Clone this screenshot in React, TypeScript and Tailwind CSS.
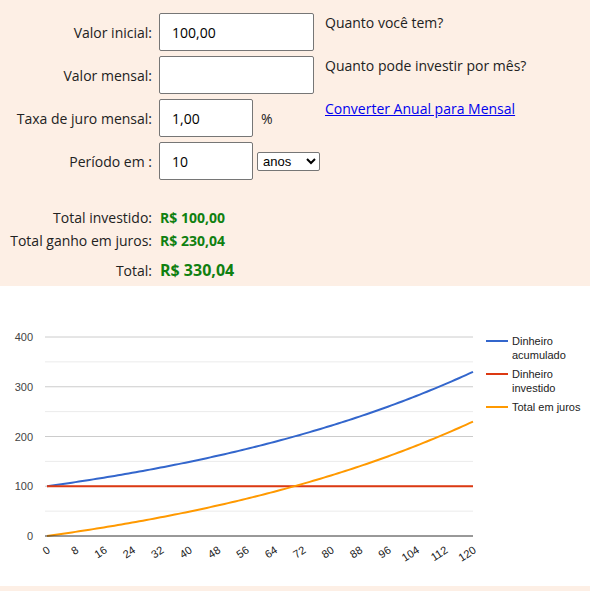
import React from 'react';

const months = Array.from({ length: 121 }, (_, i) => i);
const toX = (m: number) => 47 + m * 3.55;
const toY = (v: number) => 250 - v * 0.4975;

const linePath = (fn: (m: number) => number) =>
    months.map((m, i) => `${i === 0 ? 'M' : 'L'}${toX(m).toFixed(2)},${toY(fn(m)).toFixed(2)}`).join(' ');

const Chart: React.FC = () => {
    const acumulado = linePath(m => 100 * Math.pow(1.01, m));
    const investido = linePath(() => 100);
    const juros = linePath(m => 100 * Math.pow(1.01, m) - 100);
    const ticks = Array.from({ length: 16 }, (_, i) => i * 8);

    return (
        <svg width="590" height="300" className="block" style={{ fontFamily: '"Liberation Sans", Arial, sans-serif' }}>
            {[50, 150, 250, 350].map(v => (
                <line key={v} x1="45" x2="473" y1={toY(v)} y2={toY(v)} stroke="#ebebeb" strokeWidth="1" />
            ))}
            {[100, 200, 300, 400].map(v => (
                <line key={v} x1="45" x2="473" y1={toY(v)} y2={toY(v)} stroke="#cccccc" strokeWidth="1" />
            ))}
            {[0, 100, 200, 300, 400].map(v => (
                <text key={v} x="33" y={toY(v) + 4} textAnchor="end" fontSize="11" fill="#444">{v}</text>
            ))}
            <path d={acumulado} fill="none" stroke="#3366cc" strokeWidth="2" />
            <path d={investido} fill="none" stroke="#dc3912" strokeWidth="2" />
            <path d={juros} fill="none" stroke="#ff9900" strokeWidth="2" />
            <line x1="45" x2="473" y1={toY(0)} y2={toY(0)} stroke="#333" strokeWidth="1" />
            {ticks.map(t => (
                <text
                    key={t}
                    x={toX(t) + 4}
                    y="266"
                    textAnchor="end"
                    fontSize="11"
                    fill="#222"
                    transform={`rotate(-33 ${toX(t) + 4} 266)`}
                >
                    {t}
                </text>
            ))}
            {/* legend */}
            <line x1="486" x2="508" y1="55" y2="55" stroke="#3366cc" strokeWidth="2" />
            <text x="512" y="59" fontSize="11" fill="#222">Dinheiro</text>
            <text x="512" y="73" fontSize="11" fill="#222">acumulado</text>
            <line x1="486" x2="508" y1="88" y2="88" stroke="#dc3912" strokeWidth="2" />
            <text x="512" y="92" fontSize="11" fill="#222">Dinheiro</text>
            <text x="512" y="106" fontSize="11" fill="#222">investido</text>
            <line x1="486" x2="508" y1="121" y2="121" stroke="#ff9900" strokeWidth="2" />
            <text x="512" y="125" fontSize="11" fill="#222">Total em juros</text>
        </svg>
    );
};

const inputClass = 'h-[38px] border border-[#767676] rounded-[2px] bg-white px-3 text-[14px] text-black outline-none';

export default function App() {
    return (
        <div className="w-[590px] bg-[#fdefe5] text-[#222] text-[14px]" style={{ fontFamily: '"Open Sans", sans-serif' }}>
            <div className="h-[286px] pt-[13px]">
                <div className="grid grid-cols-[152px_auto_1fr] gap-y-[5px]">
                    <label className="self-center text-right">Valor inicial:</label>
                    <div className="pl-[7px]">
                        <input className={`${inputClass} w-[155px]`} defaultValue="100,00" />
                    </div>
                    <div className="pl-[11px] leading-[20px]">Quanto você tem?</div>

                    <label className="self-center text-right">Valor mensal:</label>
                    <div className="pl-[7px]">
                        <input className={`${inputClass} w-[155px]`} defaultValue="" />
                    </div>
                    <div className="pl-[11px] leading-[20px]">Quanto pode investir por mês?</div>

                    <label className="self-center text-right">Taxa de juro mensal:</label>
                    <div className="pl-[7px] flex items-center">
                        <input className={`${inputClass} w-[94px]`} defaultValue="1,00" />
                        <span className="ml-[8px]">%</span>
                    </div>
                    <div className="pl-[11px] leading-[20px]">
                        <a href="#" className="text-[#0000ee] underline">Converter Anual para Mensal</a>
                    </div>

                    <label className="self-center text-right">Período em :</label>
                    <div className="pl-[7px] flex items-center col-span-2">
                        <input className={`${inputClass} w-[94px]`} defaultValue="10" />
                        <select
                            className="ml-[4px] h-[19px] w-[63px] border border-[#767676] rounded-[2px] bg-white text-[13px] text-black pl-[1px]"
                            style={{ fontFamily: '"Liberation Sans", Arial, sans-serif' }}
                            defaultValue="anos"
                        >
                            <option value="anos">anos</option>
                            <option value="meses">meses</option>
                        </select>
                    </div>
                </div>

                <div className="mt-[26px] grid grid-cols-[152px_1fr] gap-x-[8px] items-baseline">
                    <div className="text-right leading-[23px]">Total investido:</div>
                    <div className="font-bold text-[#108010] leading-[23px]">R$ 100,00</div>
                    <div className="text-right leading-[23px]">Total ganho em juros:</div>
                    <div className="font-bold text-[#108010] leading-[23px]">R$ 230,04</div>
                    <div className="text-right leading-[37px]">Total:</div>
                    <div className="font-bold text-[#108010] text-[16px] leading-[37px]">R$ 330,04</div>
                </div>
            </div>
            <div className="bg-white">
                <Chart />
            </div>
            <div className="h-[5px]" />
        </div>
    );
}
